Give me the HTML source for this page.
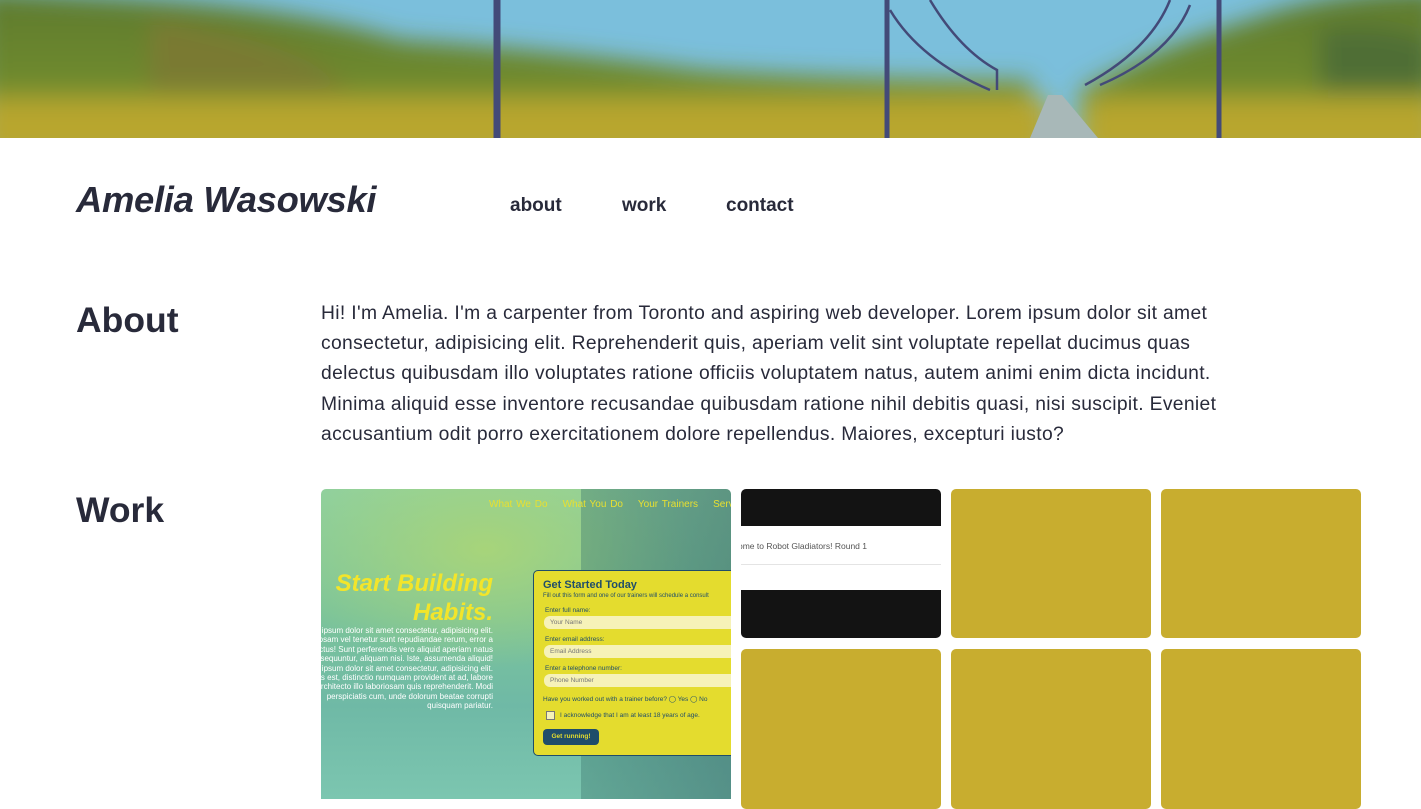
<!DOCTYPE html>
<html><head><meta charset="utf-8"><style>
*{margin:0;padding:0;box-sizing:border-box}
body{width:1421px;height:794px;overflow:hidden;background:#fff;font-family:"Liberation Sans",Arial,sans-serif;color:#282a3a;position:relative}
.hero{position:absolute;left:0;top:0;width:1421px;height:138px}
.name{position:absolute;left:76px;top:179px;font-size:36.4px;font-weight:bold;font-style:italic;letter-spacing:-0.3px}
.nav{position:absolute;top:195px;font-size:19px;font-weight:bold}
h2{position:absolute;left:76px;font-size:35.5px;font-weight:bold}
.about{position:absolute;left:321px;top:299px;width:930px;font-size:19.3px;line-height:30.2px;letter-spacing:0.34px}
.tile{position:absolute;width:200px;height:149px;border-radius:5px;background:#c8ad2f;overflow:hidden}
</style></head><body>
<svg class="hero" viewBox="0 0 1421 138" preserveAspectRatio="none">
<defs>
<filter id="b"><feGaussianBlur stdDeviation="12"/></filter>
<linearGradient id="g" x1="0" y1="0" x2="0" y2="1"><stop offset="0" stop-color="#5d7a2f"/><stop offset="0.55" stop-color="#6f8a2d"/><stop offset="0.75" stop-color="#a9a52d"/><stop offset="1" stop-color="#c0aa2e"/></linearGradient>
</defs>
<rect width="1421" height="138" fill="#7bbfdc"/>
<g filter="url(#b)">
<path d="M-20 -10 L150 0 Q300 10 400 40 Q550 50 700 70 Q850 80 1030 80 L1040 160 L-20 160Z" fill="url(#g)"/>
<path d="M1080 90 Q1150 50 1250 20 Q1330 -10 1440 -10 L1440 160 L1080 160Z" fill="url(#g)"/>
<path d="M-20 100 L1050 100 L1050 160 L-20 160Z" fill="#b8a62e"/>
<path d="M1090 100 L1440 100 L1440 160 L1090 160Z" fill="#b8a62e"/>
<path d="M150 20 Q300 40 350 90 L150 90Z" fill="#7a7a30"/>
<path d="M1320 30 Q1380 20 1430 40 L1430 90 L1320 90Z" fill="#4f6e35"/>
</g>
<path d="M1030 138 L1048 95 L1062 95 L1098 138Z" fill="#a8b8b8"/>
<g stroke="#434a78" fill="none">
<path d="M497 0 V138" stroke-width="7"/>
<path d="M887 0 V138" stroke-width="5"/>
<path d="M1219 0 V138" stroke-width="5"/>
<path d="M890 10 Q920 60 990 90" stroke-width="2.5"/>
<path d="M930 0 Q960 50 997 70 V90" stroke-width="2.5"/>
<path d="M1170 0 Q1150 50 1085 85" stroke-width="2.5"/>
<path d="M1190 5 Q1170 55 1100 85" stroke-width="2.5"/>
</g>
</svg>
<div class="name">Amelia Wasowski</div>
<div class="nav" style="left:510px">about</div>
<div class="nav" style="left:622px">work</div>
<div class="nav" style="left:726px">contact</div>
<h2 style="top:300px">About</h2>
<h2 style="top:490px">Work</h2>
<div class="about">Hi! I'm Amelia. I'm a carpenter from Toronto and aspiring web developer. Lorem ipsum dolor sit amet consectetur, adipisicing elit. Reprehenderit quis, aperiam velit sint voluptate repellat ducimus quas delectus quibusdam illo voluptates ratione officiis voluptatem natus, autem animi enim dicta incidunt. Minima aliquid esse inventore recusandae quibusdam ratione nihil debitis quasi, nisi suscipit. Eveniet accusantium odit porro exercitationem dolore repellendus. Maiores, excepturi iusto?</div>

<div class="tile" style="left:321px;top:489px;width:410px;height:310px;border-radius:5px 5px 0 0;background:linear-gradient(180deg,#8fd0a0 0%,#7cc49a 40%,#6fb9a6 70%,#7cc6b0 100%)">
<div style="position:absolute;left:0;top:0;width:410px;height:200px;background:radial-gradient(ellipse at 40% 30%,#a7d47a 0%,rgba(140,200,120,0) 60%)"></div>
<div style="position:absolute;left:260px;top:0;width:150px;height:310px;background:linear-gradient(90deg,rgba(60,120,110,0.4),rgba(60,110,110,0.6))"></div>
<div style="position:absolute;left:168px;top:10px;font-size:10px;color:#e8e030;white-space:nowrap;word-spacing:1px">What We Do&nbsp;&nbsp;&nbsp; What You Do&nbsp;&nbsp;&nbsp; Your Trainers&nbsp;&nbsp;&nbsp; Service</div>
<div style="position:absolute;right:238px;top:80px;font-size:24px;font-weight:bold;font-style:italic;color:#f3e52a;text-align:right;line-height:29px;white-space:nowrap">Start Building<br>Habits.</div>
<div style="position:absolute;right:238px;top:137px;font-size:8px;color:#fff;text-align:right;line-height:9.4px;white-space:nowrap">n ipsum dolor sit amet consectetur, adipisicing elit.<br>iosam vel tenetur sunt repudiandae rerum, error a<br>ectus! Sunt perferendis vero aliquid aperiam natus<br>nsequuntur, aliquam nisi. Iste, assumenda aliquid!<br>n ipsum dolor sit amet consectetur, adipisicing elit.<br>ris est, distinctio numquam provident at ad, labore<br>architecto illo laboriosam quis reprehenderit. Modi<br>perspiciatis cum, unde dolorum beatae corrupti<br>quisquam pariatur.</div>
<div style="position:absolute;left:212px;top:81px;width:210px;height:186px;background:#e4dc2e;border:1.5px solid #1f4d6a;border-radius:5px;color:#1f4d6a">
<div style="position:absolute;left:9px;top:8px;font-size:11px;font-weight:bold">Get Started Today</div>
<div style="position:absolute;left:9px;top:22px;font-size:6px;white-space:nowrap">Fill out this form and one of our trainers will schedule a consult</div>
<div style="position:absolute;left:11px;top:36px;font-size:6.5px">Enter full name:</div>
<div style="position:absolute;left:10px;top:45px;width:200px;height:13px;background:#f6f2b8;border-radius:6px;font-size:6.5px;color:#777;padding:3px 6px">Your Name</div>
<div style="position:absolute;left:11px;top:65px;font-size:6.5px">Enter email address:</div>
<div style="position:absolute;left:10px;top:74px;width:200px;height:13px;background:#f6f2b8;border-radius:6px;font-size:6.5px;color:#777;padding:3px 6px">Email Address</div>
<div style="position:absolute;left:11px;top:94px;font-size:6.5px">Enter a telephone number:</div>
<div style="position:absolute;left:10px;top:103px;width:200px;height:13px;background:#f6f2b8;border-radius:6px;font-size:6.5px;color:#777;padding:3px 6px">Phone Number</div>
<div style="position:absolute;left:9px;top:124px;font-size:6.5px;white-space:nowrap">Have you worked out with a trainer before? ◯ Yes ◯ No</div>
<div style="position:absolute;left:12px;top:140px;width:9px;height:9px;background:#f6f2b8;border:1px solid #777"></div>
<div style="position:absolute;left:26px;top:141px;font-size:6.5px;white-space:nowrap">I acknowledge that I am at least 18 years of age.</div>
<div style="position:absolute;left:9px;top:158px;width:56px;height:16px;background:#1f4d6a;border-radius:4px;color:#e4dc2e;font-size:6.5px;font-weight:bold;text-align:center;line-height:16px">Get running!</div>
</div>
</div>

<div class="tile" style="left:741px;top:489px;background:#131313">
<div style="position:absolute;left:0;top:37px;width:200px;height:64px;background:#fff"></div>
<div style="position:absolute;left:0;top:75px;width:200px;height:1px;background:#e4e4e4"></div>
<div style="position:absolute;left:-3px;top:52px;font-size:8.5px;color:#555;white-space:nowrap">ome to Robot Gladiators! Round 1</div>
</div>
<div class="tile" style="left:951px;top:489px"></div>
<div class="tile" style="left:1161px;top:489px"></div>
<div class="tile" style="left:741px;top:649px;height:160px"></div>
<div class="tile" style="left:951px;top:649px;height:160px"></div>
<div class="tile" style="left:1161px;top:649px;height:160px"></div>
</body></html>
